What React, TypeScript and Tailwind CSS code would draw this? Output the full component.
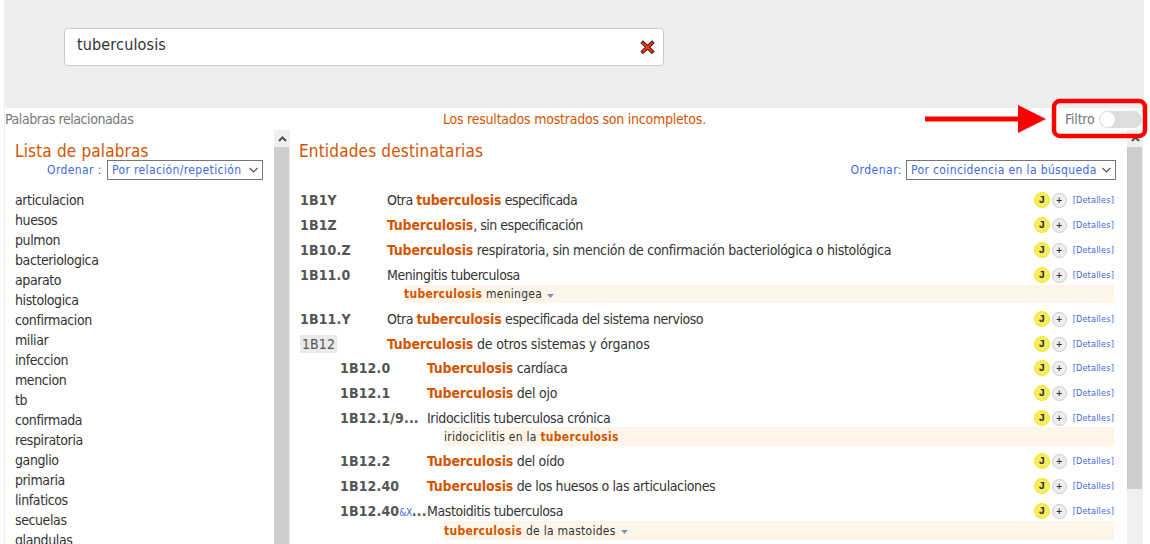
import { ReactNode } from "react";

type Row = {
  code: string;
  extra?: string;
  title: string;
  height: string;
  tracking: string;
  nested?: boolean;
  muted?: boolean;
  sub?: { text: string; menu?: boolean; box: string };
};

const words = [
  "articulacion", "huesos", "pulmon", "bacteriologica", "aparato", "histologica",
  "confirmacion", "miliar", "infeccion", "mencion", "tb", "confirmada",
  "respiratoria", "ganglio", "primaria", "linfaticos", "secuelas", "glandulas",
];

const rows: Row[] = [
  { code: "1B1Y", title: "Otra *tuberculosis* especificada", height: "h-[25px]", tracking: "tracking-[-0.52px]" },
  { code: "1B1Z", title: "*Tuberculosis*, sin especificación", height: "h-[25px]", tracking: "tracking-[-0.48px]" },
  { code: "1B10.Z", title: "*Tuberculosis* respiratoria, sin mención de confirmación bacteriológica o histológica", height: "h-[25px]", tracking: "tracking-[-0.35px]" },
  { code: "1B11.0", title: "Meningitis tuberculosa", height: "h-[22px]", tracking: "tracking-[-0.44px]", sub: { text: "*tuberculosis* meningea", menu: true, box: "h-[18px] mb-1" } },
  { code: "1B11.Y", title: "Otra *tuberculosis* especificada del sistema nervioso", height: "h-[25px]", tracking: "tracking-[-0.46px]" },
  { code: "1B12", title: "*Tuberculosis* de otros sistemas y órganos", height: "h-6", tracking: "tracking-[-0.18px]", muted: true },
  { code: "1B12.0", title: "*Tuberculosis* cardíaca", height: "h-[25px]", tracking: "tracking-[-0.35px]", nested: true },
  { code: "1B12.1", title: "*Tuberculosis* del ojo", height: "h-[25px]", tracking: "tracking-[-0.25px]", nested: true },
  { code: "1B12.1/9...", title: "Iridociclitis tuberculosa crónica", height: "h-[21px]", tracking: "tracking-[-0.35px]", nested: true, sub: { text: "iridociclitis en la *tuberculosis*", box: "h-[19px] mb-[3px]" } },
  { code: "1B12.2", title: "*Tuberculosis* del oído", height: "h-[25px]", tracking: "tracking-[-0.35px]", nested: true },
  { code: "1B12.40", title: "*Tuberculosis* de los huesos o las articulaciones", height: "h-[25px]", tracking: "tracking-[-0.38px]", nested: true },
  { code: "1B12.40", extra: "&X", title: "Mastoiditis tuberculosa", height: "h-[22px]", tracking: "tracking-[-0.42px]", nested: true, sub: { text: "*tuberculosis* de la mastoides", menu: true, box: "h-[19px]" } },
];

function Marked({ text, bold }: { text: string; bold: string }) {
  return (
    <>
      {text.split("*").map((part, i): ReactNode =>
        i % 2 ? <b key={i} className={`font-bold text-[#d45500] ${bold}`}>{part}</b> : part
      )}
    </>
  );
}

function Chevron({ up = false }: { up?: boolean }) {
  return (
    <svg width="9" height="6" viewBox="0 0 9 6" fill="none" stroke="#505050" strokeWidth={up ? 2 : 1.2}>
      <path d={up ? "M1 5 4.5 1.5 8 5" : "M.5 1 4.5 5 8.5 1"} />
    </svg>
  );
}

function SelectBox({ label, width }: { label: string; width: string }) {
  return (
    <div className={`flex h-5 items-center justify-between border border-[#767676] bg-white pr-1 pl-1 ${width}`}>
      <span className="tracking-[0.37px] whitespace-nowrap">{label}</span>
      <Chevron />
    </div>
  );
}

function ScrollBar({ thumb }: { thumb: string }) {
  return (
    <div className="flex w-4 shrink-0 flex-col bg-[#f0f0f0]">
      <div className="flex h-[17px] shrink-0 items-center justify-center"><Chevron up /></div>
      <div className={`w-[15px] bg-[#cdcdcd] ${thumb}`} />
    </div>
  );
}

function Entity({ row }: { row: Row }) {
  return (
    <div className={row.nested ? "ml-10" : ""}>
      <div className={`flex ${row.height}`}>
        <div className="flex h-6 w-[87px] shrink-0 items-center whitespace-nowrap text-[#555]">
          {row.muted ? (
            <span className="bg-[#eaeaea] px-0.5 leading-[18px] tracking-[0.1px]">{row.code}</span>
          ) : (
            <span className="font-bold tracking-[0.15px]">
              {row.code}
              {row.extra && <><span className="text-[10px] font-normal tracking-[-0.3px] text-[#4169e1]">{row.extra}</span>...</>}
            </span>
          )}
        </div>
        <div className={`flex h-6 grow items-center whitespace-pre ${row.tracking}`}>
          <span><Marked text={row.title} bold="tracking-[-0.2px]" /></span>
        </div>
        <div className="flex h-6 w-20 shrink-0 items-center">
          <span className="flex size-4 items-center justify-center rounded-full border border-[#eeea18] bg-[#f8ec60] font-['Liberation_Mono',monospace] text-[11px] leading-none font-bold">J</span>
          <span className="ml-0.5 flex size-[15px] items-center justify-center rounded-full border border-[#ccc] bg-[#eee] pt-px text-[9px] leading-none font-bold">+</span>
          <span className="mt-px ml-1.5 text-[9px] tracking-[0.2px] text-[#4169e1]">[Detalles]</span>
        </div>
      </div>
      {row.sub && (
        <div className={`ml-[104px] flex items-center bg-[#fef5e9] text-xs ${row.sub.box}`}>
          <span className="tracking-[0.27px] whitespace-pre"><Marked text={row.sub.text} bold="" /></span>
          {row.sub.menu && (
            <svg className="mt-[3px] ml-[5px]" width="7" height="4" viewBox="0 0 7 4"><path d="M0 0h7L3.5 4z" fill="#7d93b5" /></svg>
          )}
        </div>
      )}
    </div>
  );
}

export default function App() {
  return (
    <div className="relative h-[544px] w-[1150px] overflow-hidden bg-white pl-1 font-['DejaVu_Sans_Condensed','DejaVu_Sans',sans-serif] text-[14px] text-[#333]">
      <div className="flex h-[544px] w-[1140px] flex-col border-l border-[#eee]">
        <header className="h-[108px] shrink-0 rounded-bl bg-[#eee] pt-7 pl-[59px]">
          <div className="flex h-[38px] w-[600px] items-center justify-between rounded border border-[#ccc] bg-white pr-2 pl-3">
            <span className="mb-[5px] text-base tracking-[0.15px]">tuberculosis</span>
            <svg width="15" height="14" viewBox="0 0 15 14" strokeLinecap="square">
              <path d="M3 3 12 11.5M12 3 3 11.5" stroke="#38180c" strokeWidth="3.8" />
              <path d="M3 3 12 11.5M12 3 3 11.5" stroke="#ee3513" strokeWidth="2.2" />
            </svg>
          </div>
        </header>
        <div className="flex h-[22px] shrink-0 items-center text-[#777]">
          <span className="w-[438px] tracking-[-0.43px]">Palabras relacionadas</span>
          <span className="w-[622px] tracking-[-0.23px] text-[#d45500]">Los resultados mostrados son incompletos.</span>
          <span className="w-[34px] tracking-[-0.2px]">Filtro</span>
          <span className="flex h-[17px] w-[43px] shrink-0 items-center rounded-full bg-[#ddd] pl-px"><span className="size-[15px] rounded-full bg-white" /></span>
        </div>
        <main className="flex min-h-0 grow">
          <section className="flex w-[285px] shrink-0 overflow-hidden">
            <div className="w-[269px] pt-[9px] pl-[10px]">
              <h2 className="h-[21px] text-[17px] leading-6 tracking-[0.16px] text-[#d45500]">Lista de palabras</h2>
              <div className="ml-8 flex h-5 items-center gap-1 text-xs text-[#4169e1]">
                <span className="w-14 tracking-[0.4px] whitespace-nowrap">Ordenar :</span><SelectBox label="Por relación/repetición" width="w-[156px]" />
              </div>
              <ul className="mt-2.5 leading-5 tracking-[-0.4px]">
                {words.map((w) => <li key={w}>{w}</li>)}
              </ul>
            </div>
            <ScrollBar thumb="grow" />
          </section>
          <section className="flex grow overflow-hidden">
            <div className="w-[837px] shrink-0 pt-[9px] pl-[9px]">
              <h2 className="h-[21px] text-[17px] leading-6 tracking-[0.17px] text-[#d45500]">Entidades destinatarias</h2>
              <div className="mr-[11px] flex h-5 items-center justify-end gap-1 text-xs text-[#4169e1]">
                <span className="tracking-[0.5px]">Ordenar:</span><SelectBox label="Por coincidencia en la búsqueda" width="w-[210px]" />
              </div>
              <div className="mt-2 mr-[13px] ml-px">
                {rows.map((r, i) => <Entity key={i} row={r} />)}
              </div>
            </div>
            <ScrollBar thumb="h-[342px]" />
          </section>
        </main>
      </div>
      <svg className="absolute top-[96px] left-[920px]" width="230" height="46" viewBox="0 0 230 46">
        <path d="M5 23H100" stroke="#f00" strokeWidth="5" />
        <path d="M98 9 126 23 98 37z" fill="#f00" />
        <rect x="134" y="5" width="91" height="35" rx="6" fill="none" stroke="#f00" strokeWidth="4.5" />
      </svg>
    </div>
  );
}
